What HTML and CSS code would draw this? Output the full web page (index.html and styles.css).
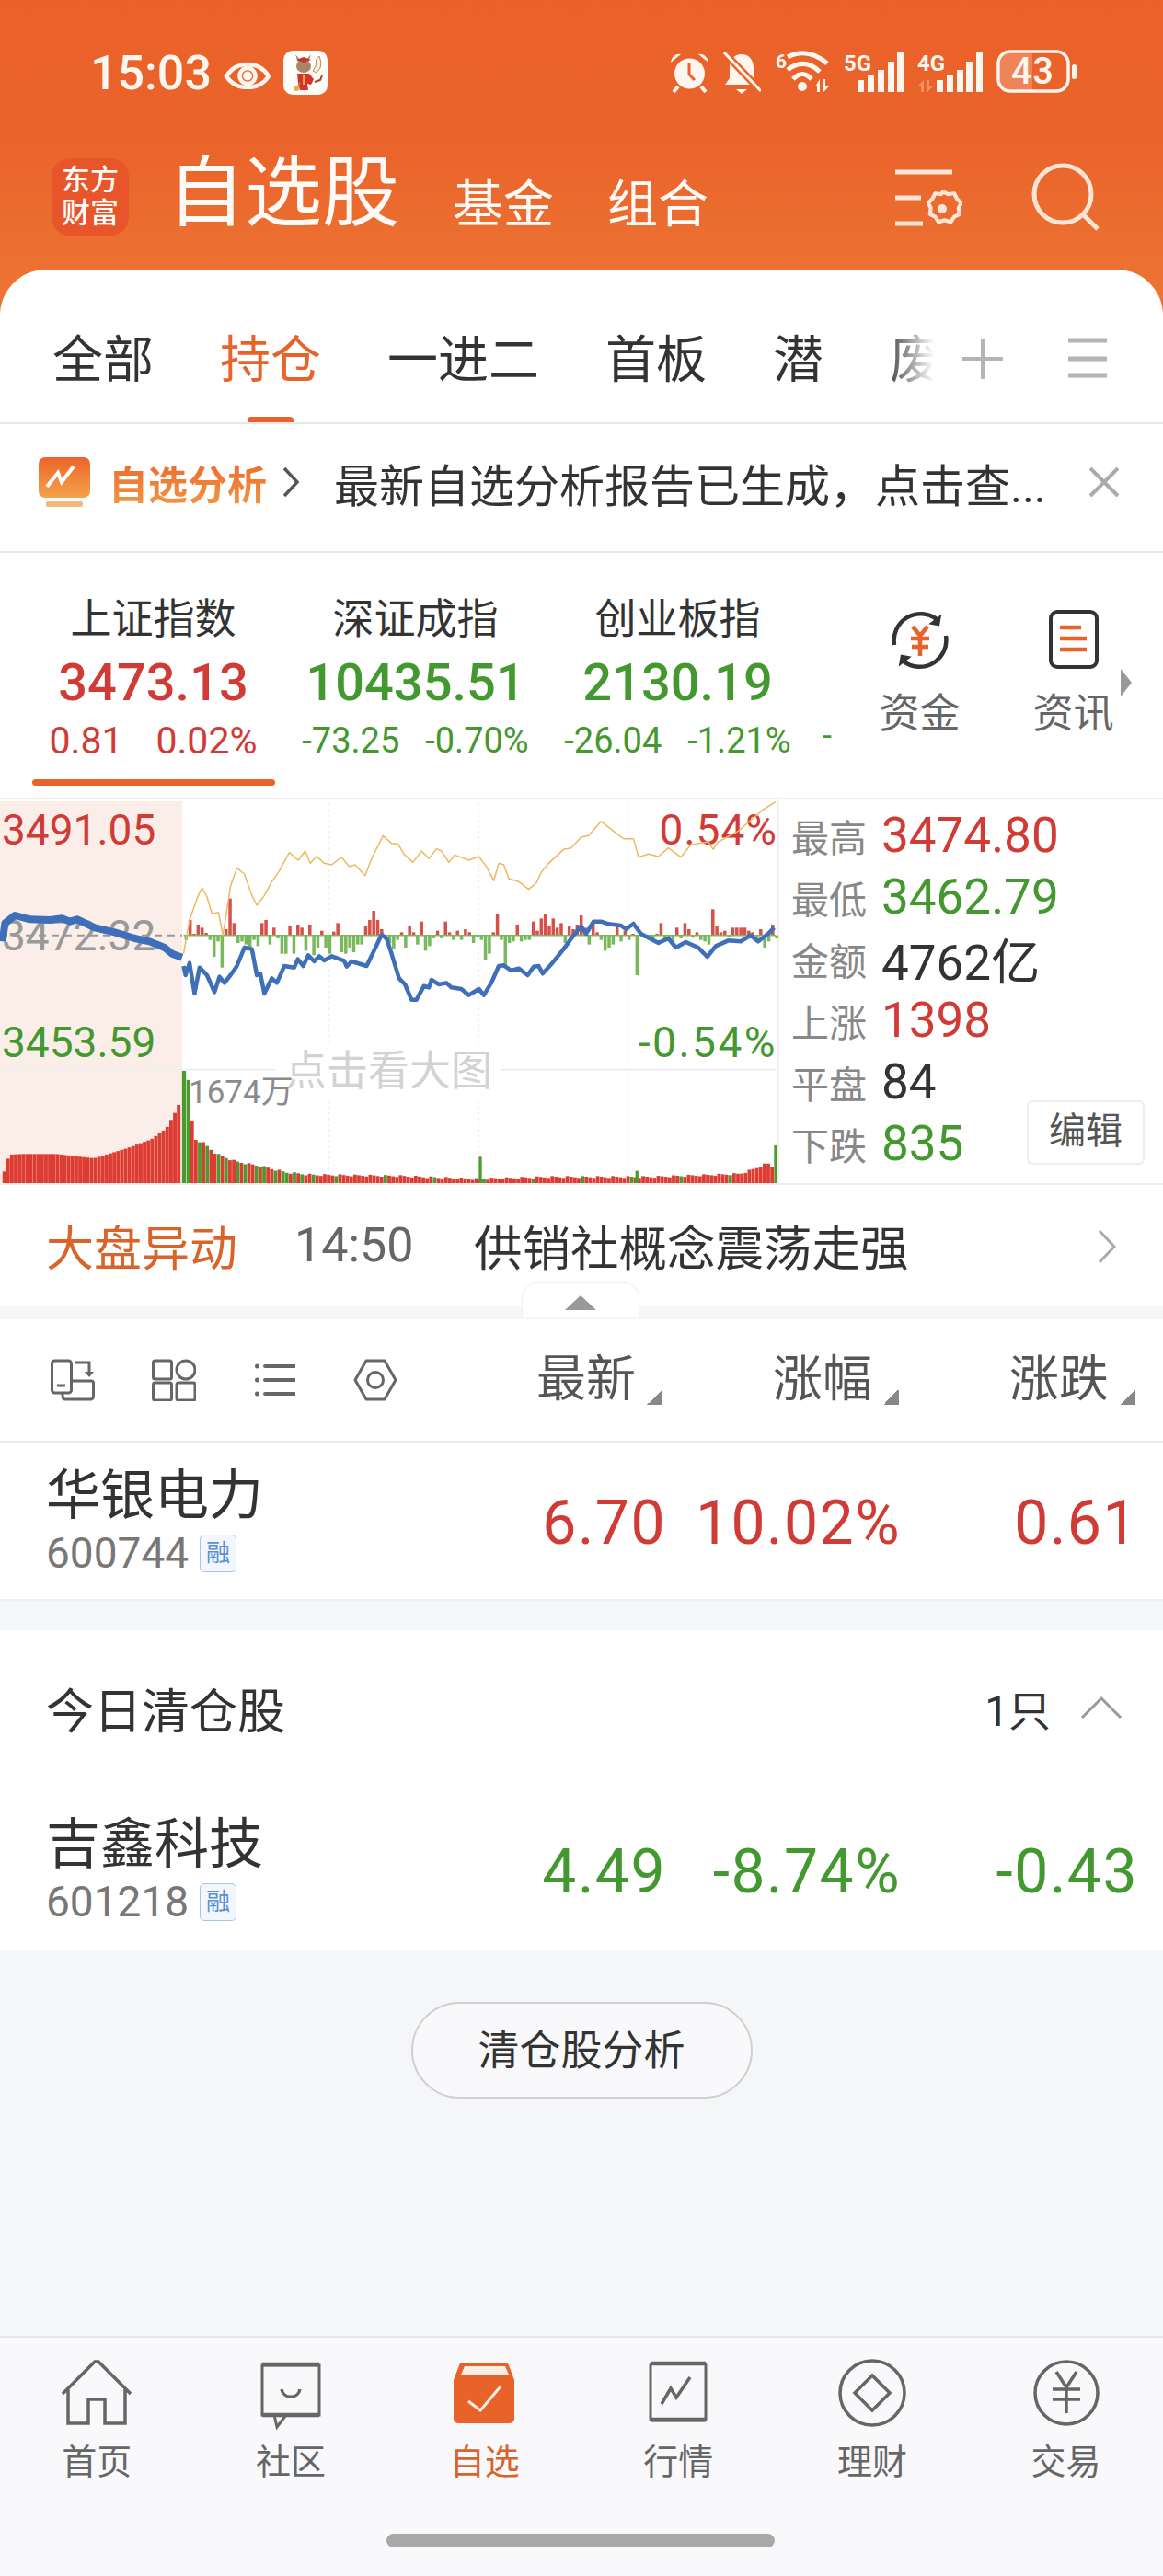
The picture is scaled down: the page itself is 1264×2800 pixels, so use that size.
FILE: index.html
```html
<!DOCTYPE html>
<html lang="zh-CN">
<head>
    <meta charset="UTF-8">
    <meta name="viewport" content="width=device-width, initial-scale=1.0">
    <title>自选股</title>
    <link rel="stylesheet" href="styles.css">
</head>
<body>
<div class="phone">

    <div class="top">
        <div class="status">
            <span class="clock">15:03</span>
            <svg class="eye" width="52" height="36" viewBox="0 0 52 36"><path d="M3 22C9 12 17 9 26 9s17 3 23 13c-6 9-14 12-23 12S9 31 3 22z" fill="none" stroke="#fff6f0" stroke-width="4.5"/><circle cx="26" cy="21.5" r="8.5" fill="none" stroke="#fff6f0" stroke-width="4.5"/><circle cx="26" cy="21.5" r="5" fill="#fff6f0"/></svg>
            <svg class="sticker" width="48" height="48" viewBox="0 0 48 48"><rect width="48" height="48" rx="10" fill="#fffdfa"/><path d="M13 4l3 9 3-2zM30 4l-3 9-3-2z" fill="#8f8f8f"/><ellipse cx="22" cy="17" rx="8" ry="7" fill="#a98468"/><path d="M14 10l8-3 8 3-8 3z" fill="#c8342a"/><path d="M15 25h13l5 6-3 6-4-1 1 7h-9l-2-8z" fill="#d5322a"/><path d="M21 26h2v11h-2z" fill="#e8b13a"/><path d="M36 9l3-3 2 7-1 6-4 5-4-2 3-5z" fill="#f7f0df" stroke="#b98a50" stroke-width="1"/><path d="M34 34l6-2 2-5" fill="none" stroke="#a3402c" stroke-width="2"/><path d="M18 35l-3 5" stroke="#b98a50" stroke-width="1.5"/><circle cx="14" cy="41" r="3" fill="#e0b040"/></svg>
            <div class="status-icons">
                <svg width="43" height="50" viewBox="0 0 43 50"><circle cx="21.5" cy="26" r="16.5" fill="#fff6f0"/><path d="M21 15v12l6 6" fill="none" stroke="#ea632b" stroke-width="3"/><path d="M1 14C2 7 7 4 12 5zM42 14C41 7 36 4 31 5z" fill="#fff6f0"/><path d="M9 40l-5 6M34 40l5 6" stroke="#fff6f0" stroke-width="4"/></svg>
                <svg width="41" height="50" viewBox="0 0 41 50"><path d="M20 5c8 0 13 6 13 15v11l5 7H2l5-7V20C7 11 12 5 20 5z" fill="#fff6f0"/><path d="M14 43h12l-6 5z" fill="#fff6f0"/><path d="M0 2l40 42" stroke="#ea632b" stroke-width="8"/><path d="M1 3l40 42" stroke="#fff6f0" stroke-width="3"/></svg>
                <svg width="59" height="50" viewBox="0 0 59 50"><text x="1" y="20" class="net-label net-small">6</text><path d="M14 8Q36-3 57 15M14 22Q32 8 49 24M20 32Q30 21 40 32" fill="none" stroke="#fff6f0" stroke-width="5"/><circle cx="30" cy="40" r="5" fill="#fff6f0"/><path d="M44 40l5-8v14h-3v-6zM52 32h3v8h4l-7 7z" fill="#fff6f0"/></svg>
                <svg width="65" height="50" viewBox="0 0 65 50"><text x="0" y="23" class="net-label" textLength="30" lengthAdjust="spacingAndGlyphs">5G</text><path d="M15 33h7v13h-7zM26 28h7v18h-7zM37 22h7v24h-7zM48 13h7v33h-7zM58 2h7v44h-7z" fill="#fff6f0"/></svg>
                <svg width="71" height="50" viewBox="0 0 71 50"><text x="0" y="23" class="net-label" textLength="30" lengthAdjust="spacingAndGlyphs">4G</text><path d="M0 40l7-7v13H4v-6zM10 33h3v7h4l-7 7z" fill="#fff6f0" opacity=".3"/><path d="M21 33h7v13h-7zM32 28h7v18h-7zM43 22h7v24h-7zM53 13h7v33h-7zM64 2h7v44h-7z" fill="#fff6f0"/></svg>
                <svg width="87" height="50" viewBox="0 0 87 50"><path d="M14 4h25v39H14a10 10 0 0 1-10-10V14A10 10 0 0 1 14 4z" fill="#fff" opacity=".22"/><rect x="2" y="2" width="76" height="43" rx="13" fill="none" stroke="#fff6f0" stroke-width="3.5"/><rect x="82" y="16" width="5" height="16" rx="2.5" fill="#fff6f0"/><text x="39" y="37" text-anchor="middle" class="batt-label" textLength="46">43</text></svg>
            </div>
        </div>

        <div class="head">
            <div class="logo">东方<br>财富</div>
            <span class="head-title">自选股</span>
            <span class="head-link">基金</span>
            <span class="head-link">组合</span>
            <svg class="head-set" width="74" height="66" viewBox="0 0 74 66"><path d="M1 4h62M1 32h28M1 60h30" stroke="#fde5d6" stroke-width="5" fill="none"/><path d="M52 27l6 3 7-1 3 6 5 5-3 6 1 7-6 3-4 6-7-2-7 2-4-6-6-3 1-7-3-6 5-5 3-6 7 1z" fill="none" stroke="#fde5d6" stroke-width="4.5" stroke-linejoin="round" transform="translate(4 0) scale(.94)"/><circle cx="52" cy="44" r="5" fill="#fde5d6"/></svg>
            <svg class="head-search" width="74" height="74" viewBox="0 0 74 74"><circle cx="34" cy="34" r="31" fill="none" stroke="#fde5d6" stroke-width="5"/><path d="M56 56l16 16" stroke="#fde5d6" stroke-width="5"/></svg>
        </div>

        <div class="tabs">
            <div class="tab-scroll">
                <span class="tab">全部</span>
                <span class="tab tab-on">持仓</span>
                <span class="tab">一进二</span>
                <span class="tab">首板</span>
                <span class="tab">潜</span>
                <span class="tab">废</span>
            </div>
            <svg class="tab-add" width="46" height="46" viewBox="0 0 46 46"><path d="M23 1v44M1 23h44" stroke="#b4b4b4" stroke-width="4"/></svg>
            <svg class="tab-menu" width="42" height="46" viewBox="0 0 42 46"><path d="M0 3h42M0 23h42M0 41h42" stroke="#b4b4b4" stroke-width="5"/></svg>
        </div>
    </div>

    <div class="notice">
        <svg width="56" height="54" viewBox="0 0 56 54"><defs><linearGradient id="ng" x1="0" y1="0" x2="0" y2="1"><stop offset="0" stop-color="#ec6429"/><stop offset="1" stop-color="#f5a24b"/></linearGradient></defs><rect width="56" height="44" rx="7" fill="url(#ng)"/><rect x="8" y="48" width="40" height="6" rx="2" fill="#f7b67a"/><path d="M9 32l12-15 4 10 13-17" fill="none" stroke="#fff" stroke-width="4"/></svg>
        <span class="notice-tag">自选分析</span>
        <svg class="chev" width="20" height="34" viewBox="0 0 20 34"><path d="M3 2l14 15L3 32" fill="none" stroke="#555" stroke-width="3.5"/></svg>
        <span class="notice-text">最新自选分析报告已生成，点击查...</span>
        <svg class="notice-x" width="34" height="34" viewBox="0 0 34 34"><path d="M2 2l30 30M32 2L2 32" stroke="#aaa" stroke-width="4"/></svg>
    </div>

    <div class="indexes">
        <div class="idx idx-on">
            <div class="idx-name">上证指数</div>
            <div class="idx-val up">3473.13</div>
            <div class="idx-sub up big"><span>0.81</span><span>0.02%</span></div>
        </div>
        <div class="idx">
            <div class="idx-name">深证成指</div>
            <div class="idx-val down">10435.51</div>
            <div class="idx-sub down"><span>-73.25</span><span>-0.70%</span></div>
        </div>
        <div class="idx">
            <div class="idx-name">创业板指</div>
            <div class="idx-val down">2130.19</div>
            <div class="idx-sub down"><span>-26.04</span><span>-1.21%</span></div>
        </div>
        <span class="idx-more down">-</span>
        <div class="tool">
            <svg width="68" height="70" viewBox="0 0 68 70"><path d="M6 40A29 29 0 0 1 52 12M62 30A29 29 0 0 1 16 58" fill="none" stroke="#333" stroke-width="4.5"/><path d="M52 3v13H40zM16 67V54h12z" fill="#333" transform="rotate(10 34 35)"/><path d="M26 20l8 10 8-10M24 33h20M25 42h18M34 30v22" fill="none" stroke="#e8632a" stroke-width="4.5"/></svg>
            <span>资金</span>
        </div>
        <div class="tool">
            <svg width="54" height="70" viewBox="0 0 54 70"><rect x="2" y="4" width="50" height="60" rx="7" fill="none" stroke="#333" stroke-width="4"/><path d="M12 21h23M12 33h29M12 45h29" stroke="#e8632a" stroke-width="4.5"/></svg>
            <span>资讯</span>
        </div>
        <svg class="idx-arrow" width="12" height="30" viewBox="0 0 12 30"><path d="M0 0l12 15L0 30z" fill="#999"/></svg>
    </div>

    <div class="market">
        <div class="chart">
            <div class="chart-shade"></div>
            <span class="lbl lbl-tl up">3491.05</span>
            <span class="lbl lbl-tr lbl-wide up">0.54%</span>
            <span class="lbl lbl-ml">3472.32</span>
            <span class="lbl lbl-bl down">3453.59</span>
            <span class="lbl lbl-br lbl-wider down">-0.54%</span>
            <svg id="trend" class="chart-svg" viewBox="0 21 1568 1257" preserveAspectRatio="none"></svg>
            <span class="chart-hint">点击看大图</span>
            <span class="lbl lbl-vol">1674万</span>
        </div>
        <div class="stats">
            <div class="stat"><span class="stat-k">最高</span><span class="stat-v up">3474.80</span></div>
            <div class="stat"><span class="stat-k">最低</span><span class="stat-v down">3462.79</span></div>
            <div class="stat"><span class="stat-k">金额</span><span class="stat-v">4762亿</span></div>
            <div class="stat"><span class="stat-k">上涨</span><span class="stat-v up">1398</span></div>
            <div class="stat"><span class="stat-k">平盘</span><span class="stat-v">84</span></div>
            <div class="stat"><span class="stat-k">下跌</span><span class="stat-v down">835</span></div>
            <span class="stat-edit">编辑</span>
        </div>
    </div>

    <div class="alert">
        <span class="alert-tag">大盘异动</span>
        <span class="alert-time">14:50</span>
        <span class="alert-text">供销社概念震荡走强</span>
        <svg class="alert-chev" width="22" height="38" viewBox="0 0 22 38"><path d="M3 2l16 17L3 36" fill="none" stroke="#aaa" stroke-width="3"/></svg>
    </div>
    <div class="strip">
        <div class="fold"><svg width="34" height="16" viewBox="0 0 34 16"><path d="M17 0l17 16H0z" fill="#999"/></svg></div>
    </div>

    <div class="toolbar">
        <svg class="tb-icon" width="48" height="46" viewBox="0 0 48 46"><rect x="1.5" y="2" width="21" height="35" rx="3" fill="none" stroke="#666" stroke-width="3"/><path d="M7 29h9" stroke="#666" stroke-width="3"/><path d="M24 24h20a2.5 2.5 0 0 1 2.5 2.500V41a3 3 0 0 1-3 3H16a3 3 0 0 1-3-3v-3" fill="none" stroke="#666" stroke-width="3"/><path d="M27 4h15v11" fill="none" stroke="#666" stroke-width="3"/><path d="M37 14h10l-5 6z" fill="#666"/></svg>
        <svg class="tb-icon" width="48" height="46" viewBox="0 0 48 46"><g fill="none" stroke="#666" stroke-width="3"><rect x="1.500" y="2" width="20" height="20" rx="2"/><circle cx="37" cy="12" r="10"/><rect x="1.500" y="26" width="20" height="19" rx="2"/><rect x="27" y="26" width="20" height="19" rx="2"/></g></svg>
        <svg class="tb-icon tb-list" width="44" height="46" viewBox="0 0 44 46"><path d="M11 8h32M11 23h32M11 38h32" stroke="#666" stroke-width="4" stroke-linecap="round"/><circle cx="2.500" cy="8" r="2.500" fill="#666"/><circle cx="2.500" cy="23" r="2.500" fill="#666"/><circle cx="2.500" cy="38" r="2.500" fill="#666"/></svg>
        <svg class="tb-icon" width="48" height="46" viewBox="0 0 48 46"><path d="M14 2h20l12 21-12 21H14L2 23z" fill="none" stroke="#666" stroke-width="3" stroke-linejoin="round"/><circle cx="24" cy="23" r="8.500" fill="none" stroke="#666" stroke-width="3"/></svg>
        <div class="sort sort-first">最新<i></i></div>
        <div class="sort">涨幅<i></i></div>
        <div class="sort sort-last">涨跌<i></i></div>
    </div>

    <div class="stock">
        <div class="stock-id">
            <div class="stock-name">华银电力</div>
            <div class="stock-code">600744<span class="rong">融</span></div>
        </div>
        <span class="cell cell-a up">6.70</span>
        <span class="cell cell-b up">10.02%</span>
        <span class="cell cell-c up">0.61</span>
    </div>

    <div class="closed">
        <div class="closed-head">
            <span class="closed-title">今日清仓股</span>
            <span class="closed-count">1只</span>
            <svg width="46" height="26" viewBox="0 0 46 26"><path d="M2 24L23 3l21 21" fill="none" stroke="#999" stroke-width="3"/></svg>
        </div>
        <div class="stock stock-last">
            <div class="stock-id">
                <div class="stock-name">吉鑫科技</div>
                <div class="stock-code">601218<span class="rong">融</span></div>
            </div>
            <span class="cell cell-a down">4.49</span>
            <span class="cell cell-b down">-8.74%</span>
            <span class="cell cell-c down">-0.43</span>
        </div>
    </div>

    <div class="filler">
        <div class="pill">清仓股分析</div>
    </div>

    <div class="tabbar">
        <div class="nav">
            <svg width="80" height="80" viewBox="0 0 80 80"><path d="M3 41L38 6h4l35 35M9 34v39h22V47h18v26h22V34" fill="none" stroke="#666" stroke-width="3.5"/></svg>
            <span>首页</span>
        </div>
        <div class="nav">
            <svg width="80" height="80" viewBox="0 0 80 80"><path d="M9 64V10h62v54H35l-10 13-3-13z" fill="none" stroke="#666" stroke-width="3"/><path d="M9 9h62M9 64h62" stroke="#666" stroke-width="4.500"/><path d="M30 36c2 11 18 11 20 0" fill="none" stroke="#666" stroke-width="3.5"/></svg>
            <span>社区</span>
        </div>
        <div class="nav nav-on">
            <svg width="80" height="80" viewBox="0 0 80 80"><path d="M17 7h46q2 0 3 3l6 16v42a5 5 0 0 1-5 5H11a5 5 0 0 1-5-5V26l6-16q1-3 3-3z" fill="#e8632a"/><path d="M18 11h44l4 9H14z" fill="#fdeee4"/><path d="M22 49l13 10 1-1 21-25" fill="none" stroke="#fdeee4" stroke-width="3"/></svg>
            <span>自选</span>
        </div>
        <div class="nav">
            <svg width="80" height="80" viewBox="0 0 80 80"><rect x="10" y="8" width="60" height="62" rx="2" fill="none" stroke="#666" stroke-width="3"/><path d="M10 8h60M10 69h60" stroke="#666" stroke-width="4.500"/><path d="M22 52l10-17 6 10 15-22" fill="none" stroke="#666" stroke-width="3.5"/></svg>
            <span>行情</span>
        </div>
        <div class="nav">
            <svg width="80" height="80" viewBox="0 0 80 80"><circle cx="40" cy="40" r="35" fill="none" stroke="#666" stroke-width="3.5"/><path d="M40 21l19 19-19 19-19-19z" fill="none" stroke="#666" stroke-width="3.5"/></svg>
            <span>理财</span>
        </div>
        <div class="nav">
            <svg width="80" height="80" viewBox="0 0 80 80"><circle cx="40" cy="40" r="34" fill="none" stroke="#666" stroke-width="3.5"/><path d="M29 17l11 17 11-17M25 36h30M25 47h30M40 34v28" fill="none" stroke="#666" stroke-width="3.5"/></svg>
            <span>交易</span>
        </div>
        <div class="home-bar"></div>
    </div>
</div>
<script src="chart.js"></script>
</body>
</html>
```

FILE: styles.css
```css
* {
    box-sizing: border-box;
}
body {
    margin: 0;
    font-family: Roboto, "Noto Sans CJK SC", sans-serif;
    color: #333;
    background-color: #f5f6f8;
}
.phone {
    width: 1264px;
    height: 2800px;
    display: flex;
    flex-direction: column;
    overflow: hidden;
}
.up { color: #d13b36; }
.down { color: #43982f; }

/* orange header */
.top {
    background: linear-gradient(#ea622a 0, #ea632b 150px, #ed7634 340px);
}
.status {
    height: 158px;
    padding-left: 98px;
    display: flex;
    align-items: center;
    color: #fff6f0;
}
.clock {
    font-size: 52px;
    font-weight: 500;
    width: 145px;
}
.sticker {
    margin-left: 13px;
}
.status-icons {
    margin-left: auto;
    padding-right: 94px;
    display: flex;
    gap: 15.2px;
}
.net-label {
    font: bold 24px Roboto, sans-serif;
    fill: #fff6f0;
}
.net-small {
    font-size: 21px;
}
.batt-label {
    font: 500 40px Roboto, sans-serif;
    fill: #fff6f0;
}
.head {
    height: 135px;
    padding-left: 56px;
    display: flex;
    align-items: baseline;
    position: relative;
    color: #fffaf6;
}
.logo {
    width: 84px;
    height: 84px;
    margin-top: 14px;
    align-self: flex-start;
    border-radius: 20px;
    background-color: #e8552a;
    font-size: 31px;
    font-weight: 500;
    line-height: 36px;
    text-align: center;
    padding-top: 6px;
}
.head-title {
    font-size: 84px;
    line-height: 84px;
    margin: 11px 58px 0 42px;
}
.head-link {
    font-size: 55px;
    margin-right: 58px;
    position: relative;
    top: 2px;
}
.head-set {
    position: absolute;
    left: 972px;
    top: 25px;
}
.head-search {
    position: absolute;
    left: 1121px;
    top: 19px;
}
.tabs {
    height: 168px;
    background-color: #fff;
    border-radius: 50px 50px 0 0;
    border-bottom: 2px solid #e8e8e8;
    display: flex;
    align-items: center;
    position: relative;
}
.tab-scroll {
    width: 1030px;
    height: 166px;
    padding: 29px 0 0 57px;
    display: flex;
    align-items: center;
    gap: 72px;
    overflow: hidden;
    -webkit-mask-image: linear-gradient(to right, #000 960px, transparent 1015px);
    mask-image: linear-gradient(to right, #000 960px, transparent 1015px);
}
.tab {
    font-size: 55px;
    line-height: 80px;
    white-space: nowrap;
    position: relative;
    color: #333;
}
.tab-on {
    color: #e8632a;
}
.tab-on:after {
    content: "";
    position: absolute;
    left: 30px;
    bottom: -29px;
    width: 50px;
    height: 7px;
    border-radius: 4px 4px 0 0;
    background-color: #e8632a;
}
.tab-add {
    margin: 27px 0 0 15px;
}
.tab-menu {
    margin: 27px 0 0 70px;
}

/* notice */
.notice {
    height: 140px;
    background-color: #fff;
    border-bottom: 2px solid #e8e8e8;
    padding: 0 0 12px 42px;
    display: flex;
    align-items: center;
}
.notice-tag {
    margin-left: 20px;
    font-size: 43px;
    font-weight: 700;
    background: linear-gradient(#ec6429, #f29a45);
    -webkit-background-clip: text;
    background-clip: text;
    color: transparent;
}
.chev {
    margin-left: 16px;
}
.notice-text {
    margin-left: 37px;
    font-size: 49px;
    white-space: nowrap;
    width: 820px;
}

/* index cards */
.indexes {
    height: 266px;
    background-color: #fff;
    padding-left: 24px;
    display: flex;
    position: relative;
}
.idx {
    width: 285px;
    text-align: center;
    padding-top: 43px;
    position: relative;
}
.idx-on:after {
    content: "";
    position: absolute;
    left: 11px;
    bottom: 13px;
    width: 264px;
    height: 7px;
    border-radius: 4px;
    background-color: #e8632a;
}
.idx-name {
    font-size: 45px;
    line-height: 60px;
}
.idx-val {
    font-size: 56px;
    font-weight: 500;
    line-height: 76px;
}
.idx-sub {
    font-size: 38px;
    line-height: 50px;
    display: flex;
    justify-content: center;
    gap: 28px;
}
.idx-sub.big {
    font-size: 41px;
    gap: 36px;
}
.idx-more {
    width: 37px;
    padding: 178px 0 0 15px;
    font-size: 36px;
}
.tool {
    width: 167px;
    padding-top: 60px;
    display: flex;
    flex-direction: column;
    align-items: center;
    font-size: 44px;
    color: #666;
}
.tool span {
    margin-top: 15px;
    line-height: 60px;
}
.idx-arrow {
    position: absolute;
    left: 1218px;
    top: 126px;
}

/* chart and stats */
.market {
    height: 419px;
    background-color: #fff;
    border-top: 2px solid #eee;
    display: flex;
}
.chart {
    width: 850px;
    position: relative;
}
.chart-shade {
    position: absolute;
    left: 0;
    top: 2px;
    width: 198px;
    height: 417px;
    background-color: #fbeee8;
}
.chart-svg {
    position: absolute;
    left: 0;
    top: -2px;
    width: 850px;
    height: 419px;
}
.lbl {
    position: absolute;
    font-size: 46px;
    line-height: 50px;
}
.lbl-wide {
    letter-spacing: 1px;
}
.lbl-wider {
    letter-spacing: 2.5px;
}
.lbl-tl { left: 2px; top: 8px; }
.lbl-tr { right: 5px; top: 8px; }
.lbl-ml { left: 2px; top: 123px; color: #999; }
.lbl-bl { left: 2px; top: 239px; }
.lbl-br { right: 5px; top: 239px; }
.lbl-vol {
    left: 205px;
    top: 294px;
    font-size: 35px;
    color: #8a8a8a;
}
.chart-hint {
    position: absolute;
    left: 300px;
    top: 266px;
    padding: 0 10px;
    font-size: 45px;
    line-height: 60px;
    color: #d2d2d2;
    background-color: #fff;
}
.stats {
    flex: 1;
    padding: 5px 0 0 10px;
    position: relative;
}
.stat {
    height: 67px;
    display: flex;
    align-items: center;
}
.stat-k {
    font-size: 41px;
    color: #888;
    width: 98px;
}
.stat-v {
    font-size: 53px;
}
.stat-edit {
    position: absolute;
    left: 266px;
    top: 327px;
    width: 128px;
    height: 70px;
    border: 2px solid #eee;
    border-radius: 6px;
    font-size: 40px;
    line-height: 64px;
    text-align: center;
    color: #555;
}

/* market alert */
.alert {
    height: 134px;
    background-color: #fff;
    border-top: 2px solid #eee;
    padding: 0 0 2px 50px;
    display: flex;
    align-items: center;
    font-size: 52px;
    position: relative;
}
.alert-tag {
    color: #d9642a;
    width: 270px;
}
.alert-time {
    color: #666;
    width: 195px;
}
.alert-text {
    font-size: 52.5px;
}
.alert-chev {
    position: absolute;
    left: 1192px;
    top: 48px;
}
.strip {
    height: 14px;
    background-color: #f5f6f8;
    position: relative;
}
.fold {
    position: absolute;
    left: 567px;
    top: -26px;
    width: 128px;
    height: 38px;
    background-color: #fff;
    border: 1px solid #f0f0f0;
    border-bottom: 0;
    border-radius: 16px 16px 0 0;
    text-align: center;
    padding-top: 13px;
    line-height: 0;
}

/* column headers */
.toolbar {
    height: 134px;
    background-color: #fff;
    border-bottom: 2px solid #e9e9e9;
    padding-left: 55px;
    display: flex;
    align-items: center;
}
.tb-icon {
    flex: none;
    margin-right: 62px;
}
.tb-list {
    margin-left: 2px;
    margin-right: 63px;
}
.sort {
    flex: none;
    width: 257px;
    font-size: 54px;
    line-height: 80px;
    color: #555;
    position: relative;
}
.sort-first {
    margin-left: 89px;
}
.sort-last {
    width: 166px;
}
.sort i {
    position: absolute;
    left: 120px;
    top: 50px;
    width: 17px;
    height: 17px;
    background: linear-gradient(to bottom right, transparent 50%, #888 50%);
}

/* stock rows */
.stock {
    height: 172px;
    background-color: #fff;
    padding: 0 0 0 50px;
    display: flex;
    align-items: center;
    border-bottom: 2px solid #f0f0f0;
}
.stock-last {
    height: 176px;
    border-bottom: 0;
}
.stock-id {
    width: 483px;
}
.stock-name {
    font-size: 59px;
    line-height: 70px;
}
.stock-code {
    font-size: 46px;
    line-height: 54px;
    color: #777;
    display: flex;
    align-items: center;
}
.rong {
    margin-left: 12px;
    width: 40px;
    height: 41px;
    border: 1.5px solid #a9c4e6;
    border-radius: 5px;
    font-size: 26px;
    line-height: 38px;
    text-align: center;
    color: #5b8fd0;
    background-color: #f2f7fd;
}
.cell {
    font-size: 66px;
    letter-spacing: 1.500px;
    text-align: right;
    padding-top: 4px;
}
.cell-a { width: 191px; }
.cell-b { width: 255px; }
.cell-c { width: 258px; }
.closed {
    margin-top: 32px;
    background-color: #fff;
}
.closed-head {
    height: 172px;
    padding: 0 44px 4px 50px;
    display: flex;
    align-items: center;
    font-size: 52px;
}
.closed-title {
    flex: 1;
}
.closed-count {
    font-size: 46px;
    margin-right: 32px;
}

/* empty area */
.filler {
    flex: 1;
    padding-top: 56px;
    display: flex;
    justify-content: center;
    align-items: flex-start;
}
.pill {
    width: 371px;
    height: 105px;
    border: 2px solid #cfcfcf;
    border-radius: 53px;
    font-size: 45px;
    line-height: 104px;
    text-align: center;
    background-color: #f9f9fb;
}

/* bottom nav */
.tabbar {
    height: 261px;
    background-color: #f9f9fb;
    border-top: 2px solid #e6e6e6;
    padding-top: 20px;
    display: flex;
    align-items: flex-start;
    position: relative;
}
.nav {
    width: 16.666%;
    display: flex;
    flex-direction: column;
    align-items: center;
    font-size: 38px;
    color: #666;
}
.nav span {
    line-height: 50px;
    margin-top: 10px;
}
.nav-on {
    color: #d9642a;
}
.home-bar {
    position: absolute;
    left: 420px;
    top: 213px;
    width: 422px;
    height: 15px;
    border-radius: 8px;
    background-color: #a9a9a9;
}
```

FILE: chart.js
```js
// intraday chart, coordinates are in the svg viewBox
const yellow = [368,530,380,420,395,350,405,315,415,345,425,400,438,395,447,470,462,310,475,250,490,270,505,340,515,372,530,340,545,295,560,260,580,200,598,225,612,195,622,235,635,212,650,235,665,240,685,215,700,245,712,240,732,275,745,220,768,145,785,170,798,172,810,205,828,232,845,195,860,220,875,188,885,195,900,232,912,208,940,225,960,213,975,245,990,292,1000,235,1010,240,1020,285,1040,295,1060,320,1075,300,1085,265,1100,235,1130,190,1145,185,1165,150,1180,145,1205,98,1230,130,1250,155,1270,155,1280,215,1300,205,1320,213,1340,185,1365,215,1385,175,1420,165,1430,190,1440,165,1480,130,1530,60,1555,35];
const bluePre = [5,490,10,430,30,405,60,418,100,420,125,415,140,425,155,418,190,445,230,460,270,480,300,490,330,510,345,530,365,542];
const blue = [368,570,372,600,380,560,390,660,400,575,415,600,430,655,440,605,450,625,462,600,475,570,490,510,505,515,515,600,522,595,530,660,545,610,555,625,570,570,590,575,597,548,608,570,618,535,630,555,640,538,650,552,665,538,690,553,695,572,705,555,735,570,750,520,765,468,775,480,785,530,800,610,812,630,825,680,835,680,850,635,860,640,865,615,880,630,895,625,905,640,925,645,940,665,960,645,970,665,985,625,1000,570,1010,568,1025,585,1040,578,1058,600,1070,572,1080,570,1088,595,1105,565,1130,515,1150,470,1165,440,1175,465,1190,425,1205,425,1220,433,1245,438,1255,450,1270,432,1285,465,1320,495,1340,480,1355,510,1375,492,1400,510,1418,540,1435,505,1460,487,1485,490,1505,470,1520,490,1540,465,1552,445];
const flow = [-15,50,5,35,25,8,-15,-70,-20,-105,20,120,40,-25,-20,-30,-45,-15,-35,40,50,-30,25,-10,-60,-60,30,-60,35,25,-50,35,-65,-40,15,-40,-60,12,40,-55,-60,-40,-55,-30,-30,30,50,80,50,20,-15,-25,-45,-15,10,-40,30,10,-30,45,-50,-35,-10,15,-10,45,10,-15,15,-15,20,10,-25,-5,-15,-80,-60,10,70,-15,-100,-25,-20,35,-20,-15,-15,45,15,55,70,30,55,25,40,-25,30,20,35,65,25,-30,40,10,-15,-50,-40,-30,35,-20,15,-15,5,-130,10,-10,-15,-20,5,40,-15,-10,-30,25,-10,40,20,-8,10,-15,-20,-30,85,30,10,15,-5,25,25,25,25,15,10,-10,20,-40,-20,35,-10];
const preVol = [5,1240,15,1185,40,1183,110,1183,185,1197,250,1165,300,1135,330,1100,350,1040,362,995];
const postVol = [378,1010,385,1130,405,1145,430,1180,470,1205,520,1220,570,1240,620,1248,800,1252,950,1262,1100,1255,1300,1255,1480,1245,1510,1228,1535,1210,1550,1230];
const BASE = 1278, MID = 470;
const RED = '#dc3c32', GREEN = '#4a9a2e';

function interp(pts, x) {
    for (let i = 0; i < pts.length - 2; i += 2) {
        if (x <= pts[i + 2]) {
            const t = (x - pts[i]) / (pts[i + 2] - pts[i]);
            return pts[i + 1] + (pts[i + 3] - pts[i + 1]) * t;
        }
    }
    return pts[pts.length - 1];
}

function bar(x, y1, y2, w, color) {
    return `<rect x="${x}" y="${Math.min(y1, y2)}" width="${w}" height="${Math.abs(y2 - y1)}" fill="${color}"/>`;
}

function line(pts, color, width) {
    return `<polyline points="${pts.join(' ')}" fill="none" stroke="${color}" stroke-width="${width}" vector-effect="non-scaling-stroke" stroke-linejoin="round"/>`;
}

let out = '';
// grid
[660, 960, 1258].forEach(x => {
    out += `<path d="M${x} 21V${BASE}" stroke="#eee" stroke-width="1" stroke-dasharray="3 3" vector-effect="non-scaling-stroke"/>`;
});
out += `<path d="M0 908H1555" stroke="#eee" stroke-width="2" vector-effect="non-scaling-stroke"/>`;
out += `<path d="M1560 21V${BASE}" stroke="#eee" stroke-width="2" vector-effect="non-scaling-stroke"/>`;

// flow bars
flow.forEach((v, i) => {
    out += bar(370 + i * 8, MID, MID - v, 6.5, v > 0 ? '#d8504a' : '#7ab85c');
});
out += `<path d="M0 470H365" stroke="#999" stroke-width="2" stroke-dasharray="8 6" vector-effect="non-scaling-stroke"/>`;
out += `<path d="M368 470H1555" stroke="#7ab85c" stroke-width="1.5" vector-effect="non-scaling-stroke"/>`;

// volume
for (let x = 5; x < 362; x += 7.6) {
    out += bar(x, interp(preVol, x), BASE, 7.2, RED);
}
out += bar(365, 912, BASE, 8, GREEN);
for (let x = 374, i = 0; x < 1550; x += 7.6, i++) {
    const isGreen = (i * 7) % 5 < 2 && x < 640 || (i * 11) % 13 === 0;
    out += bar(x, interp(postVol, x) + (i % 4) * 2, BASE, 7, isGreen ? GREEN : RED);
}
out += bar(960, 1192, BASE, 6, GREEN);
out += bar(1274, 1238, BASE, 6, GREEN);
out += bar(1552, 1155, BASE, 6, GREEN);

out += line(yellow, '#ecb95e', 1.5);
out += line(bluePre, '#3f6fb8', 8);
out += line(blue, '#3f6fb8', 4.5);
document.getElementById('trend').innerHTML = out;
```
